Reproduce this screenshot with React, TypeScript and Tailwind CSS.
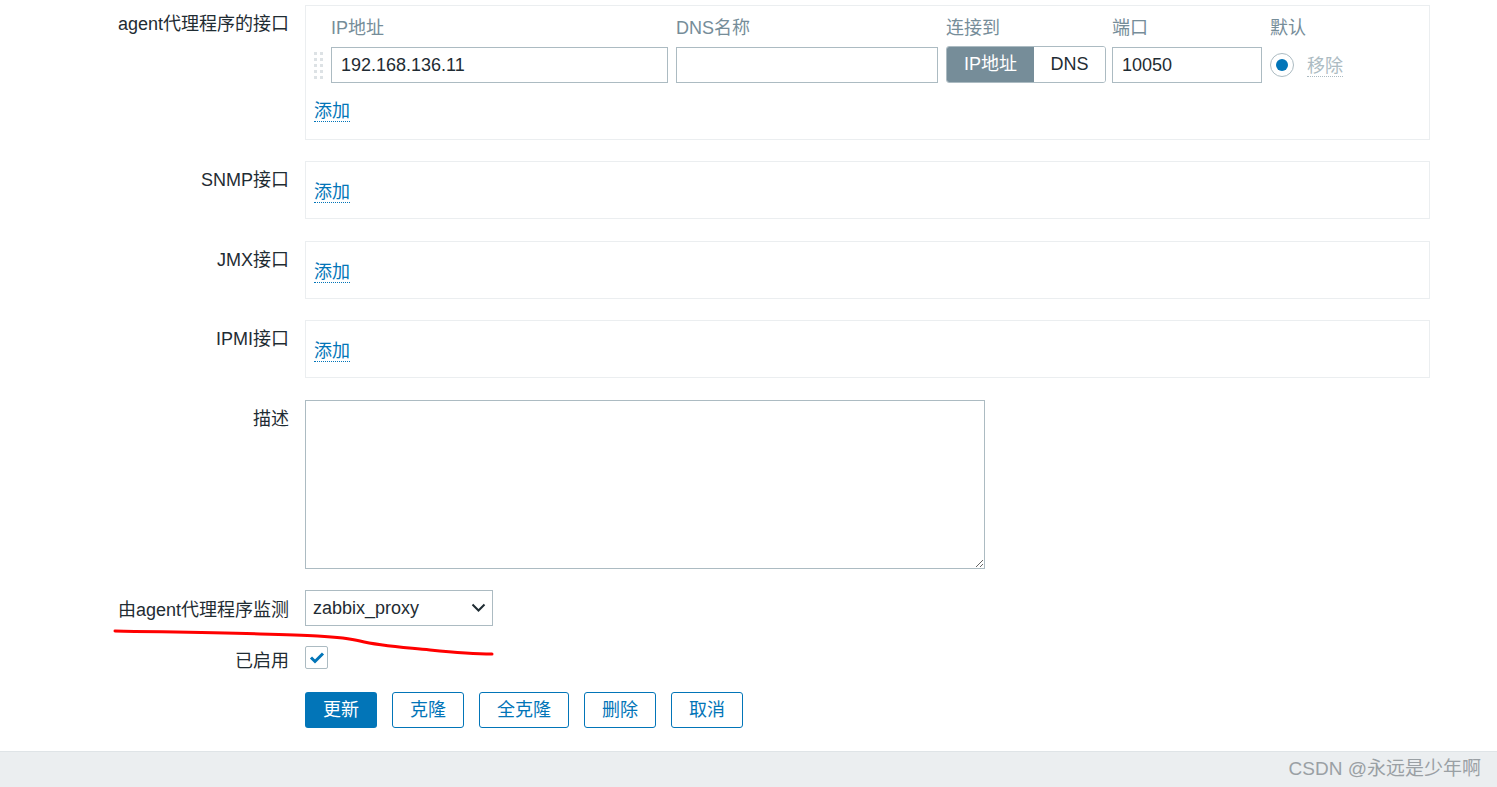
import React from "react";

const FONT = '"Liberation Sans", Arial, "Noto Sans CJK SC", sans-serif';

function Label({ children, pt = "pt-[6px]" }: { children: React.ReactNode; pt?: string }) {
  return (
    <div className={`w-[289px] shrink-0 text-right leading-[27px] text-[#1f2c33] ${pt}`}>{children}</div>
  );
}

function AddLink() {
  return (
    <span className="text-[#0275b8] border-b border-dotted border-[#0275b8] leading-[20px] inline-block">添加</span>
  );
}

function SimpleBox({ label }: { label: string }) {
  return (
    <div className="flex">
      <Label>{label}</Label>
      <div className="ml-[16px] w-[1125px] h-[58px] border border-[#ebeef0] pl-[8px] flex items-center">
        <div className="mt-[4px]">
          <AddLink />
        </div>
      </div>
    </div>
  );
}

function DragHandle() {
  const dots = [];
  for (let r = 0; r < 5; r++) {
    for (let c = 0; c < 2; c++) {
      dots.push(<div key={`${r}-${c}`} className="w-[3px] h-[3px] bg-[#dde2e5]" />);
    }
  }
  return <div className="grid grid-cols-2 gap-x-[3px] gap-y-[3px] w-[9px]">{dots}</div>;
}

export default function App() {
  return (
    <div className="relative w-[1497px] h-[787px] bg-white overflow-hidden text-[18px]" style={{ fontFamily: FONT }}>
      <div className="pt-[5px] flex flex-col">
        {/* Agent interfaces */}
        <div className="flex">
          <Label>agent代理程序的接口</Label>
          <div className="ml-[16px] w-[1125px] h-[135px] border border-[#ebeef0] pl-[8px]">
            <div className="flex h-[41px] items-center pt-[4px] text-[#768d99] leading-[27px]">
              <div className="w-[17px]" />
              <div className="w-[337px]">IP地址</div>
              <div className="w-[8px]" />
              <div className="w-[262px]">DNS名称</div>
              <div className="w-[8px]" />
              <div className="w-[160px]">连接到</div>
              <div className="w-[6px]" />
              <div className="w-[150px]">端口</div>
              <div className="w-[8px]" />
              <div>默认</div>
            </div>
            <div className="flex h-[36px] items-center">
              <div className="w-[17px] flex items-center">
                <DragHandle />
              </div>
              <div className="w-[337px] h-[36px] border border-[#acbbc2] flex items-center pl-[9px] text-[#1f2c33]">
                192.168.136.11
              </div>
              <div className="w-[8px]" />
              <div className="w-[262px] h-[36px] border border-[#acbbc2]" />
              <div className="w-[8px]" />
              <div className="w-[160px] h-[37px] flex rounded-[3px] border border-[#acbbc2] overflow-hidden -mt-[1px]">
                <div className="w-[87px] bg-[#768d99] text-white flex items-center justify-center">IP地址</div>
                <div className="flex-1 bg-white text-[#1f2c33] flex items-center justify-center">DNS</div>
              </div>
              <div className="w-[6px]" />
              <div className="w-[150px] h-[36px] border border-[#acbbc2] flex items-center pl-[9px] text-[#1f2c33]">
                10050
              </div>
              <div className="w-[8px]" />
              <div className="w-[24px] h-[24px] rounded-full border border-[#acbbc2] flex items-center justify-center">
                <div className="w-[12px] h-[12px] rounded-full bg-[#0275b8]" />
              </div>
              <div className="ml-[13px] mt-[2px] text-[#acbbc2] border-b border-dotted border-[#acbbc2] leading-[20px]">
                移除
              </div>
            </div>
            <div className="mt-[15px] leading-[27px]">
              <AddLink />
            </div>
          </div>
        </div>

        <div className="mt-[21px]">
          <SimpleBox label="SNMP接口" />
        </div>
        <div className="mt-[22px]">
          <SimpleBox label="JMX接口" />
        </div>
        <div className="mt-[21px]">
          <SimpleBox label="IPMI接口" />
        </div>

        {/* Description */}
        <div className="flex mt-[22px]">
          <Label>描述</Label>
          <textarea
            className="ml-[16px] w-[680px] h-[169px] border border-[#acbbc2] outline-none resize"
            defaultValue=""
          />
        </div>

        {/* Proxy select */}
        <div className="flex mt-[21px]">
          <Label pt="pt-[7px]">由agent代理程序监测</Label>
          <div className="ml-[16px] w-[188px] h-[36px] border border-[#acbbc2] flex items-center justify-between pl-[7px] pr-[6px] text-[#1f2c33]">
            <span>zabbix_proxy</span>
            <svg width="15" height="10" viewBox="0 0 15 10" fill="none">
              <path d="M1.5 1.5 L7.5 7.5 L13.5 1.5" stroke="#1f2c33" strokeWidth="2" />
            </svg>
          </div>
        </div>

        {/* Enabled */}
        <div className="flex mt-[20px] h-[23px]">
          <div className="w-[289px] shrink-0 text-right text-[#1f2c33] leading-[27px] pt-[2px]">已启用</div>
          <div className="ml-[16px] w-[23px] h-[23px] border border-[#acbbc2] rounded-[2px] flex items-center justify-center">
            <svg width="16" height="13" viewBox="0 0 16 13" fill="none">
              <path d="M2 6.5 L6 10.5 L14 2.5" stroke="#0275b8" strokeWidth="3" />
            </svg>
          </div>
        </div>

        {/* Buttons */}
        <div className="flex mt-[23px]">
          <div className="w-[289px] shrink-0" />
          <div className="ml-[16px] flex gap-[15px]">
            <button className="w-[72px] h-[36px] rounded-[3px] bg-[#0275b8] text-white">更新</button>
            <button className="w-[72px] h-[36px] rounded-[3px] border border-[#0275b8] text-[#0275b8] bg-white">克隆</button>
            <button className="w-[90px] h-[36px] rounded-[3px] border border-[#0275b8] text-[#0275b8] bg-white">全克隆</button>
            <button className="w-[72px] h-[36px] rounded-[3px] border border-[#0275b8] text-[#0275b8] bg-white">删除</button>
            <button className="w-[72px] h-[36px] rounded-[3px] border border-[#0275b8] text-[#0275b8] bg-white">取消</button>
          </div>
        </div>
      </div>

      {/* Footer */}
      <div className="absolute left-0 right-0 bottom-0 h-[36px] bg-[#ebeef0] border-t border-[#dfe4e7] flex items-center justify-end pr-[16px]">
        <span className="text-[19px] text-[#9aa0a4]">CSDN @永远是少年啊</span>
      </div>

      {/* Red hand-drawn annotation */}
      <svg className="absolute left-0 top-0 pointer-events-none" width="1497" height="787">
        <path
          d="M115 631 C 160 632, 200 632, 260 634 C 300 635, 340 636, 360 641 C 380 646, 400 647, 430 650 C 460 653, 480 654, 492 654"
          stroke="#ff0000"
          strokeWidth="3"
          fill="none"
          strokeLinecap="round"
        />
      </svg>
    </div>
  );
}
